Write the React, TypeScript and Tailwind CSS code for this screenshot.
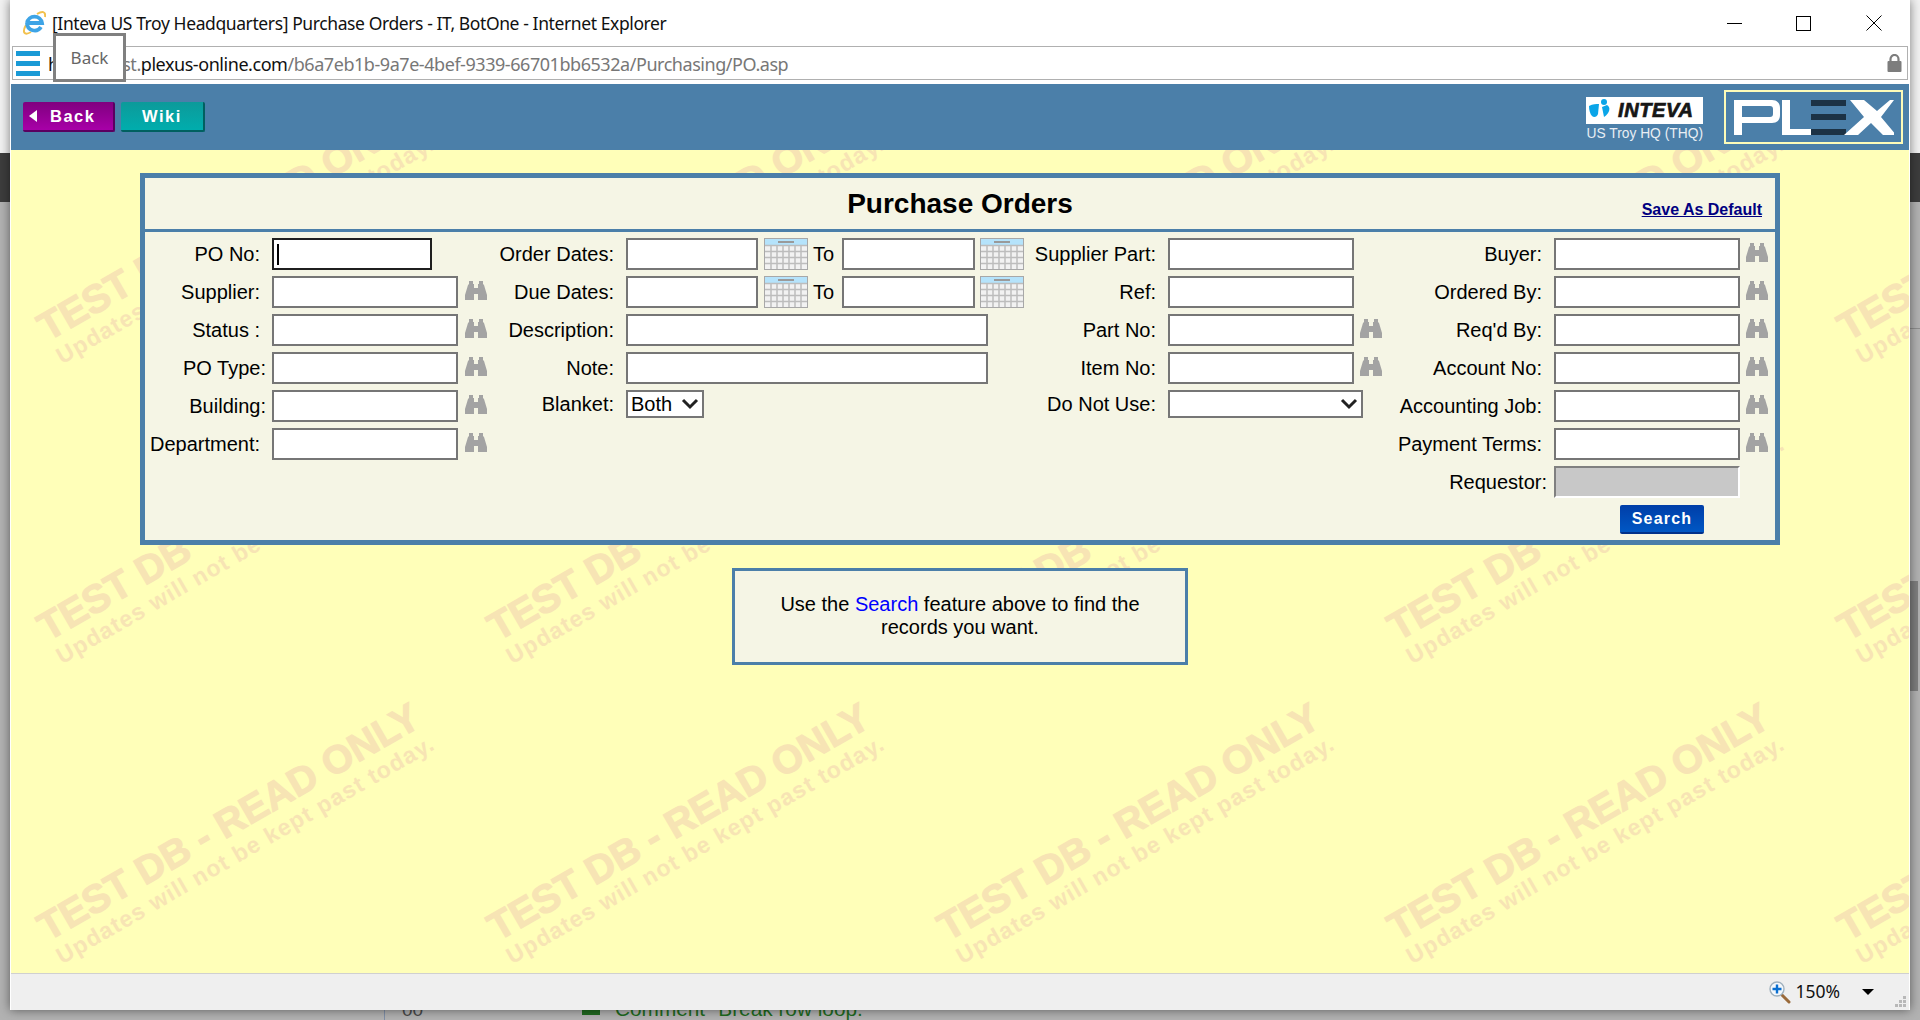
import React from 'react';

const FONT = "font-['Liberation_Sans',Arial,sans-serif]";
const UI_FONT = "font-['Noto_Sans',sans-serif]";

const Binoculars = () => (
  <svg width="24" height="21" viewBox="0 0 24 21" className="shrink-0 block -mt-[4px]" aria-hidden="true">
    <path
      fill="#a3a3a3"
      d="M5 1h4v3h1v4h4V4h1V1h4v3l1 1 3 10v5h-9v-6h-4v6H1v-5L4 5l1-1z"
    />
    <path fill="#f5f5e5" d="M11 1h2v2h-2z" />
  </svg>
);

const Calendar = () => (
  <svg width="44" height="32" viewBox="0 0 44 32" className="shrink-0 block" aria-hidden="true">
    <rect x="0.5" y="0.5" width="43" height="31" fill="#f2f2f2" stroke="#a8a8a8" />
    <rect x="1" y="1" width="42" height="6" fill="#b5e3fb" />
    <rect x="14" y="3" width="16" height="2" fill="#9a9a9a" />
    <path
      stroke="#bdbdbd"
      strokeWidth="1.5"
      fill="none"
      d="M1 7.5h42M1 13.5h42M1 19.5h42M1 25.5h42M7 7v24M13 7v24M19 7v24M25 7v24M31 7v24M37 7v24"
    />
  </svg>
);

const Input = ({ w, focus }: { w: string; focus?: boolean }) => (
  <div
    className={`${w} h-8 shrink-0 bg-white border-2 ${focus ? 'border-[#1f1f1f] flex items-center pl-[3px]' : 'border-[#767676]'}`}
  >
    {focus && <div className="w-[2px] h-[21px] bg-black" />}
  </div>
);

const Select = ({ w, text }: { w: string; text?: string }) => (
  <div className={`${w} h-7 shrink-0 bg-white border-2 border-[#767676] flex items-center justify-between pl-[3px] pr-[3px] text-[20px] leading-none`}>
    <span>{text}</span>
    <svg width="18" height="12" viewBox="0 0 18 12" aria-hidden="true">
      <path d="M2 2l7 7 7-7" fill="none" stroke="#222" strokeWidth="3" />
    </svg>
  </div>
);

// one right aligned label cell, pad is the gap kept after the text
const Label = ({ text, w, pad }: { text: string; w: string; pad: string }) => (
  <div className={`${w} ${pad} shrink-0 text-right whitespace-nowrap text-[20px] leading-none`}>{text}</div>
);

const Row = ({ children, short }: { children: React.ReactNode; short?: boolean }) => (
  <div className={`flex items-center ${short ? 'h-7 mb-[10px]' : 'h-8 mb-[6px]'}`}>{children}</div>
);

const col1 = [
  { label: 'PO No:', pad: 'pr-[12px]', focus: true },
  { label: 'Supplier:', pad: 'pr-[12px]' },
  { label: 'Status :', pad: 'pr-[12px]' },
  { label: 'PO Type:', pad: 'pr-[6px]' },
  { label: 'Building:', pad: 'pr-[6px]' },
  { label: 'Department:', pad: 'pr-[12px]' },
];

const col4 = ['Buyer:', 'Ordered By:', "Req'd By:", 'Account No:', 'Accounting Job:', 'Payment Terms:'];

const Tile = () => (
  <div className="relative w-[450px] h-[300px] shrink-0">
    <span className="absolute left-[29px] top-[158px] origin-bottom-left -rotate-30 whitespace-nowrap font-bold text-[39.5px] leading-none text-[#f7e4b4] [-webkit-text-stroke:1px_#f7e4b4]">
      TEST DB - READ ONLY
    </span>
    <span className="absolute left-[42px] top-[195px] origin-bottom-left -rotate-30 whitespace-nowrap font-bold text-[23px] leading-none tracking-[1.2px] text-[#f7e4b4]">
      Updates will not be kept past today.
    </span>
  </div>
);

const IeIcon = () => (
  <svg width="24" height="24" viewBox="0 0 24 24" aria-hidden="true">
    <path fill="none" stroke="#f2c14e" strokeWidth="2" d="M4 14C0 21 2 25 9 21" />
    <path fill="none" stroke="#f2c14e" strokeWidth="2" d="M15 3c5-3 9-3 8 3" />
    <path fill="none" stroke="#3ea4e6" strokeWidth="3.8" d="M5 12a7.6 7.6 0 0 1 15 0H5M5 12a7.6 7.6 0 0 0 14 4" />
  </svg>
);

const PlexLogo = () => (
  <div className="w-[179px] h-[54px] border-2 border-[#fdfbb8] shrink-0 flex items-center justify-center">
    <svg width="160" height="35" viewBox="0 0 160 35" aria-hidden="true">
      <path fill="white" fillRule="evenodd" d="M0 0h38c5 0 8 3 8 8v7c0 5-3 8-8 8H8v12H0zM8 6v11h28c2 0 3-1 3-3V9c0-2-1-3-3-3z" />
      <path fill="white" d="M48 0h8v29h21v6H48z" />
      <rect x="77" y="0" width="35" height="6" fill="#1c3245" />
      <rect x="77" y="14" width="35" height="6" fill="#1c3245" />
      <rect x="77" y="29" width="35" height="6" fill="#1c3245" />
      <path fill="white" d="M116 0h14l13 11L156 0h4L147 17l15 18h-13l-12-12-13 12h-14l20-18z" />
    </svg>
  </div>
);

const IntevaLogo = () => (
  <div className="w-[117px] h-[27px] bg-white flex items-center pl-[2px] gap-[6px] overflow-hidden">
    <svg width="24" height="22" viewBox="0 0 24 22" className="shrink-0" aria-hidden="true">
      <path fill="#0aa5e8" d="M1 7c4-2 7-2 10-2l-1 10c-1 3-4 4-6 2C2 15 1 11 1 7z" />
      <circle cx="16" cy="3" r="3" fill="#0aa5e8" />
      <path fill="#0aa5e8" d="M14 8l5-2c4 2 3 8-3 12z" />
    </svg>
    <span className="italic font-bold text-[20px] leading-none tracking-[0.6px] text-[#161616] [-webkit-text-stroke:0.7px_#161616]">INTEVA</span>
  </div>
);

const ZoomIcon = () => (
  <svg width="22" height="23" viewBox="0 0 22 23" aria-hidden="true">
    <path stroke="#9a6a3a" strokeWidth="3" strokeLinecap="round" d="M13 14l7 7" />
    <circle cx="8" cy="8" r="7" fill="#f4f8fc" stroke="#9fb0bd" strokeWidth="1.4" />
    <path stroke="#0a6fd0" strokeWidth="2.4" d="M8 3.5v9M3.5 8h9" />
  </svg>
);

const ResizeGrip = () => (
  <svg width="12" height="12" viewBox="0 0 12 12" className="absolute right-[2px] bottom-[2px]" aria-hidden="true">
    <path fill="#b8b8b8" d="M8 0h3v3H8zM4 4h3v3H4zM8 4h3v3H8zM0 8h3v3H0zM4 8h3v3H4zM8 8h3v3H8z" />
  </svg>
);

export default function App() {
  return (
    <div className={`relative w-[1920px] h-[1020px] overflow-hidden bg-[#b2b2b2] ${FONT}`}>
      {/* what is behind the browser window */}
      <div className="absolute left-0 top-0 w-full h-[153px] bg-[#f2f2f2]" />
      <div className="absolute left-0 top-[153px] w-full h-[49px] bg-[#3d3d3d]" />
      <div className="absolute left-[1910px] top-[328px] w-[10px] h-px bg-[#8e8e8e]" />
      <div className="absolute left-[1910px] top-[581px] w-[8px] h-[110px] bg-[#7f7f7f]" />
      <div className="absolute left-[615px] top-[999px] whitespace-nowrap text-[20.8px] leading-none text-[#1f6b1f]">Comment "Break row loop.</div>
      <div className="absolute left-[582px] top-[1008px] w-[18px] h-[7px] bg-[#1f6b1f]" />
      <div className="absolute left-[402px] top-[1000px] text-[19px] leading-none text-[#4a4a4a]">00</div>
      <div className="absolute left-[384px] top-[1010px] w-px h-[10px] bg-[#8090a8]" />

      {/* browser window */}
      <div className="absolute left-[10px] top-0 w-[1900px] h-[1010px] bg-white flex flex-col shadow-[0_0_10px_rgba(0,0,0,0.5)]">
        {/* title bar */}
        <div className={`h-[46px] shrink-0 flex items-center pl-[12px] ${UI_FONT} text-[#111]`}>
          <IeIcon />
          <span className="ml-[6px] mt-px text-[17.5px] leading-none tracking-[-0.4px] whitespace-nowrap">[Inteva US Troy Headquarters] Purchase Orders - IT, BotOne - Internet Explorer</span>
          <div className="ml-auto flex items-center">
            <div className="w-[68px] flex justify-center"><div className="w-[15px] h-px bg-black" /></div>
            <div className="w-[70px] flex justify-center"><div className="w-[15px] h-[15px] border border-black" /></div>
            <div className="w-[72px] flex justify-center">
              <svg width="16" height="16" viewBox="0 0 16 16" aria-hidden="true"><path stroke="black" fill="none" d="M.5.5l15 15M15.5.5l-15 15" /></svg>
            </div>
          </div>
        </div>

        {/* address bar */}
        <div className={`h-[34px] mx-[2px] shrink-0 border border-[#b0b0b0] flex items-center pl-[3px] pr-[5px] ${UI_FONT}`}>
          <div className="flex flex-col gap-[5px] w-[24px] shrink-0">
            <div className="h-[5px] bg-[#1a9ad6]" />
            <div className="h-[5px] bg-[#1a9ad6]" />
            <div className="h-[5px] bg-[#1a9ad6]" />
          </div>
          <span className="ml-[8px] mt-px text-[18px] leading-none tracking-[-0.45px] whitespace-nowrap text-[#777]">
            <span className="text-[#111]">h</span>
            ttps://test.
            <span className="text-[#111]">plexus-online.com</span>
            /b6a7eb1b-9a7e-4bef-9339-66701bb6532a/Purchasing/PO.asp
          </span>
          <svg width="15" height="18" viewBox="0 0 15 18" className="ml-auto" aria-hidden="true">
            <path fill="none" stroke="#7d7d7d" strokeWidth="2.2" d="M3.5 8V5a4 4 0 0 1 8 0v3" />
            <rect x="0.5" y="7" width="14" height="11" rx="1" fill="#7d7d7d" />
          </svg>
        </div>

        {/* plex header */}
        <div className="h-[66px] mt-[4px] mx-px shrink-0 bg-[#4b7fa9] flex items-center pl-[12px] pr-[6px]">
          <div className="flex gap-[6px]">
            <div className="w-[92px] h-[30px] rounded-[2px] border-b-2 border-r-2 border-[#5a0060] bg-gradient-to-b from-[#80007f] to-[#a800a8] flex items-center pl-[6px] text-white font-bold text-[16.5px] tracking-[1.5px]">
              <span className="w-0 h-0 border-y-[6px] border-y-transparent border-r-[8px] border-r-white" />
              <span className="ml-[13px]">Back</span>
            </div>
            <div className="w-[84px] h-[30px] rounded-[2px] border-b-2 border-r-2 border-[#006060] bg-gradient-to-b from-[#0c9a9a] to-[#00adad] flex items-center justify-center text-white font-bold text-[16.5px] tracking-[1.5px]">
              Wiki
            </div>
          </div>
          <div className="ml-auto flex items-center gap-[21px]">
            <div className="flex flex-col items-end mt-[3px]">
              <IntevaLogo />
              <span className="mt-[3px] text-[13.8px] leading-none text-[#e8eef4] whitespace-nowrap">US Troy HQ (THQ)</span>
            </div>
            <PlexLogo />
          </div>
        </div>

        {/* page */}
        <div className="relative flex-1 min-h-0 mx-px bg-[#ffffb9] overflow-hidden">
          <div className="absolute left-[-439px] top-[-300px] w-[2700px] flex flex-wrap">
            {Array.from({ length: 24 }).map((_, i) => (
              <Tile key={i} />
            ))}
          </div>

          <div className="relative pt-[23px] flex flex-col items-center text-black">
            {/* search form */}
            <div className="w-[1640px] h-[372px] border-[5px] border-[#4b7fa9] bg-[#f5f5e5]">
              <div className="relative h-[54px] border-b-[3px] border-[#4b7fa9] flex items-center justify-center">
                <h1 className="font-bold text-[28px] leading-none">Purchase Orders</h1>
                <a className="absolute right-[13px] bottom-[11px] font-bold text-[16px] leading-none underline text-[#000080]">Save As Default</a>
              </div>

              <div className="flex pt-[6px] pl-[5px]">
                {/* supplier column */}
                <div className="w-[341px] shrink-0">
                  {col1.map(r => (
                    <Row key={r.label}>
                      <Label text={r.label} w="w-[122px]" pad={r.pad} />
                      <Input w={r.focus ? 'w-[160px]' : 'w-[186px]'} focus={r.focus} />
                      {!r.focus && <div className="ml-[6px]"><Binoculars /></div>}
                    </Row>
                  ))}
                </div>

                {/* dates column */}
                <div className="w-[532px] shrink-0">
                  <Row>
                    <Label text="Order Dates:" w="w-[135px]" pad="pr-[12px]" />
                    <Input w="w-[132px]" />
                    <div className="ml-[6px]"><Calendar /></div>
                    <span className="ml-[5px] w-[29px] shrink-0 text-[20px] leading-none">To</span>
                    <Input w="w-[133px]" />
                    <div className="ml-[5px] shrink-0"><Calendar /></div>
                  </Row>
                  <Row>
                    <Label text="Due Dates:" w="w-[135px]" pad="pr-[12px]" />
                    <Input w="w-[132px]" />
                    <div className="ml-[6px]"><Calendar /></div>
                    <span className="ml-[5px] w-[29px] shrink-0 text-[20px] leading-none">To</span>
                    <Input w="w-[133px]" />
                    <div className="ml-[5px] shrink-0"><Calendar /></div>
                  </Row>
                  <Row>
                    <Label text="Description:" w="w-[135px]" pad="pr-[12px]" />
                    <Input w="w-[362px]" />
                  </Row>
                  <Row>
                    <Label text="Note:" w="w-[135px]" pad="pr-[12px]" />
                    <Input w="w-[362px]" />
                  </Row>
                  <Row short>
                    <Label text="Blanket:" w="w-[135px]" pad="pr-[12px]" />
                    <Select w="w-[78px]" text="Both" />
                  </Row>
                </div>

                {/* part column */}
                <div className="w-[365px] shrink-0">
                  {['Supplier Part:', 'Ref:', 'Part No:', 'Item No:'].map((l, i) => (
                    <Row key={l}>
                      <Label text={l} w="w-[145px]" pad="pr-[12px]" />
                      <Input w="w-[186px]" />
                      {i > 1 && <div className="ml-[5px]"><Binoculars /></div>}
                    </Row>
                  ))}
                  <Row short>
                    <Label text="Do Not Use:" w="w-[145px]" pad="pr-[12px]" />
                    <Select w="w-[195px]" />
                  </Row>
                </div>

                {/* buyer column */}
                <div className="flex-1">
                  {col4.map(l => (
                    <Row key={l}>
                      <Label text={l} w="w-[166px]" pad="pr-[12px]" />
                      <Input w="w-[186px]" />
                      <div className="ml-[5px]"><Binoculars /></div>
                    </Row>
                  ))}
                  <Row>
                    <Label text="Requestor:" w="w-[166px]" pad="pr-[7px]" />
                    <div className="w-[186px] h-8 shrink-0 bg-[#c8c8c8] border-2 border-t-[#808080] border-l-[#808080] border-r-white border-b-white" />
                  </Row>
                  <div className="flex">
                    <div className="ml-[232px] w-[84px] h-[29px] rounded-[2px] border-b-2 border-[#00308a] bg-gradient-to-b from-[#003ea8] to-[#0057c4] flex items-center justify-center text-white font-bold text-[16px] tracking-[1.2px] mt-[1px]">
                      Search
                    </div>
                  </div>
                </div>
              </div>
            </div>

            {/* hint box */}
            <div className="mt-[23px] w-[456px] h-[97px] border-[3px] border-[#4b7fa9] bg-[#f5f5e5] flex items-center justify-center text-center text-[20px] leading-[23px] pb-[2px]">
              <p className="w-[380px]">
                Use the <span className="text-[#0000ff]">Search</span> feature above to find the records you want.
              </p>
            </div>
          </div>
        </div>

        {/* status bar */}
        <div className={`relative h-[37px] shrink-0 mx-px bg-[#efefef] border-t border-[#d0d0d0] flex items-center justify-end ${UI_FONT}`}>
          <ZoomIcon />
          <span className="ml-[4px] text-[17.5px] leading-none text-[#111]">150%</span>
          <span className="ml-[22px] mr-[35px] w-0 h-0 border-x-[6px] border-x-transparent border-t-[6px] border-t-black" />
          <ResizeGrip />
        </div>

        {/* Back tooltip */}
        <div className={`absolute left-[43px] top-[33px] w-[73px] h-[49px] bg-white border-[3px] border-[#808080] flex items-center justify-center text-[17px] text-[#666] ${UI_FONT}`}>
          Back
        </div>
      </div>
    </div>
  );
}
